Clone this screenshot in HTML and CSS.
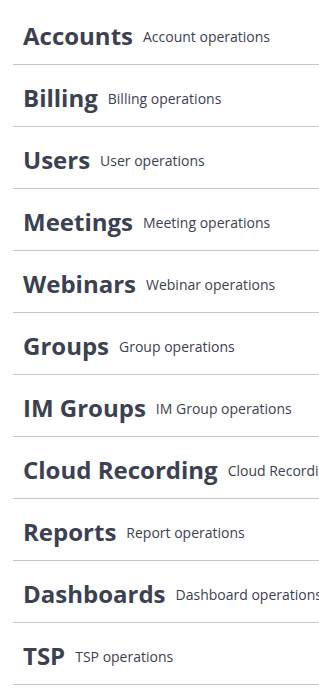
FILE: index.html
```html
<!DOCTYPE html>
<html>
<head>
<meta charset="utf-8">
<link rel="stylesheet" href="styles.css">
</head>
<body>
<div class="tags">
  <div class="tag"><span class="name">Accounts</span><span class="desc">Account operations</span></div>
  <div class="tag"><span class="name">Billing</span><span class="desc">Billing operations</span></div>
  <div class="tag"><span class="name">Users</span><span class="desc">User operations</span></div>
  <div class="tag"><span class="name">Meetings</span><span class="desc">Meeting operations</span></div>
  <div class="tag"><span class="name">Webinars</span><span class="desc">Webinar operations</span></div>
  <div class="tag"><span class="name">Groups</span><span class="desc">Group operations</span></div>
  <div class="tag"><span class="name">IM Groups</span><span class="desc">IM Group operations</span></div>
  <div class="tag"><span class="name">Cloud Recording</span><span class="desc">Cloud Recording operations</span></div>
  <div class="tag"><span class="name">Reports</span><span class="desc">Report operations</span></div>
  <div class="tag"><span class="name">Dashboards</span><span class="desc">Dashboard operations</span></div>
  <div class="tag"><span class="name">TSP</span><span class="desc">TSP operations</span></div>
</div>
</body>
</html>
```
FILE: styles.css
```css
html, body {
  margin: 0;
  padding: 0;
  background: #fff;
  overflow: hidden;
}
.tags {
  padding-top: 3px;
  margin-left: 13px;
  font-family: "Open Sans", sans-serif;
  color: #3b4151;
}
.tag {
  display: flex;
  align-items: center;
  padding: 17px 0 12px 10px;
  border-bottom: 1px solid rgba(59, 65, 81, 0.3);
  white-space: nowrap;
}
.name {
  font-size: 24px;
  font-weight: 700;
  line-height: 32px;
}
.desc {
  font-size: 14px;
  line-height: 19px;
  padding: 0 10px;
}
```
